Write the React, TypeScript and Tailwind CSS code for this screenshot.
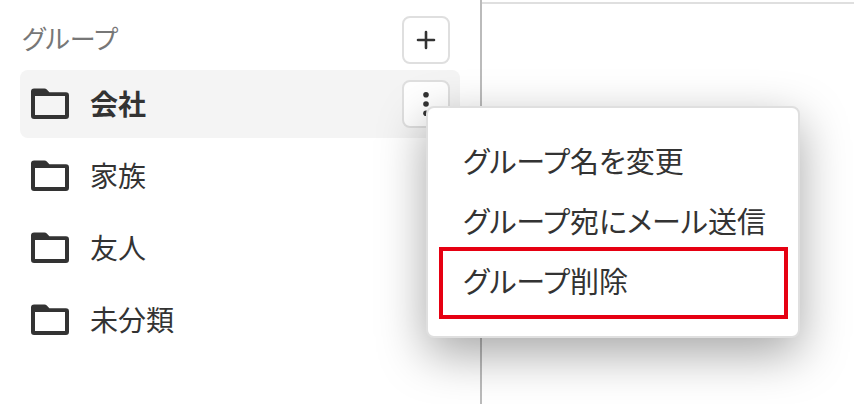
import React from "react";

function FolderIcon() {
  return (
    <svg width="40" height="32" viewBox="0 0 40 32" aria-hidden="true" className="shrink-0">
      <path
        fill="#333"
        fillRule="evenodd"
        d="M4.3 .4H14.4C15.4 .4 16.2 .8 16.8 1.5L19.4 4.2H35.7A3.2 3.2 0 0 1 39 7.4V27.8A3.2 3.2 0 0 1 35.7 31H4.3A3.2 3.2 0 0 1 1 27.8V3.6A3.2 3.2 0 0 1 4.3 .4ZM5 8V27H35V8Z"
      />
    </svg>
  );
}

const iconButton =
  "flex size-12 items-center justify-center rounded-lg border-2 border-[#dfdfdf] bg-white";

const groups = [
  { name: "会社", active: true },
  { name: "家族", active: false },
  { name: "友人", active: false },
  { name: "未分類", active: false },
];

function GroupMenu() {
  return (
    <div
      role="menu"
      className="absolute top-[26px] left-6 z-10 flex w-[374px] flex-col rounded-lg border-2 border-[#dfdfdf] bg-white pt-[22px] pr-2.5 pb-[26px] pl-[11px] text-[29px] whitespace-nowrap shadow-[0_16px_48px_rgba(0,0,0,0.35)]"
    >
      <button type="button" role="menuitem" className="h-[60px] pl-6 text-left">
        グループ名を変更
      </button>
      <button type="button" role="menuitem" className="h-[60px] pl-6 text-left">
        グループ宛にメール送信
      </button>
      <button type="button" role="menuitem" className="relative h-[60px] pl-6 text-left">
        グループ削除
        <span className="absolute inset-x-0 -top-[3px] h-[72px] border-4 border-[#e60012]" />
      </button>
    </div>
  );
}

export default function App() {
  return (
    <div className="flex min-h-screen overflow-hidden bg-white font-['Noto_Sans_CJK_JP',sans-serif] text-[28px] leading-10 text-[#333] [font-feature-settings:'palt']">
      <aside className="w-[482px] shrink-0 border-r-2 border-[#bbb] px-5 pt-4">
        <div className="mb-1.5 flex items-center justify-between pr-2.5 pl-0.5">
          <h2 className="pb-1 text-[26px] text-[#777]">グループ</h2>
          <button type="button" aria-label="グループを追加" className={iconButton}>
            <svg width="20" height="20" viewBox="0 0 20 20" aria-hidden="true">
              <path d="M10 2V18M2 10H18" stroke="#333" strokeWidth="2.6" strokeLinecap="round" />
            </svg>
          </button>
        </div>
        <ul className="flex flex-col gap-1">
          {groups.map((group) => (
            <li
              key={group.name}
              className={
                group.active
                  ? "flex h-[68px] items-center rounded-lg bg-[#f4f4f4] pr-2.5 font-bold"
                  : "flex h-[68px] items-center pr-2.5"
              }
            >
              <button type="button" className="flex h-full grow items-center gap-5 pl-2.5 text-left">
                <FolderIcon />
                <span className="pb-0.5">{group.name}</span>
              </button>
              {group.active && (
                <div className="relative font-normal">
                  <button type="button" aria-label="メニュー" className={iconButton}>
                    <svg width="24" height="28" viewBox="0 0 24 28" fill="#333" aria-hidden="true">
                      <circle cx="12" cy="4.7" r="2.8" />
                      <circle cx="12" cy="14" r="2.8" />
                      <circle cx="12" cy="23.3" r="2.8" />
                    </svg>
                  </button>
                  <GroupMenu />
                </div>
              )}
            </li>
          ))}
        </ul>
      </aside>
      <main className="grow pt-0.5">
        <div className="border-t-2 border-[#dfdfdf]" />
      </main>
    </div>
  );
}
